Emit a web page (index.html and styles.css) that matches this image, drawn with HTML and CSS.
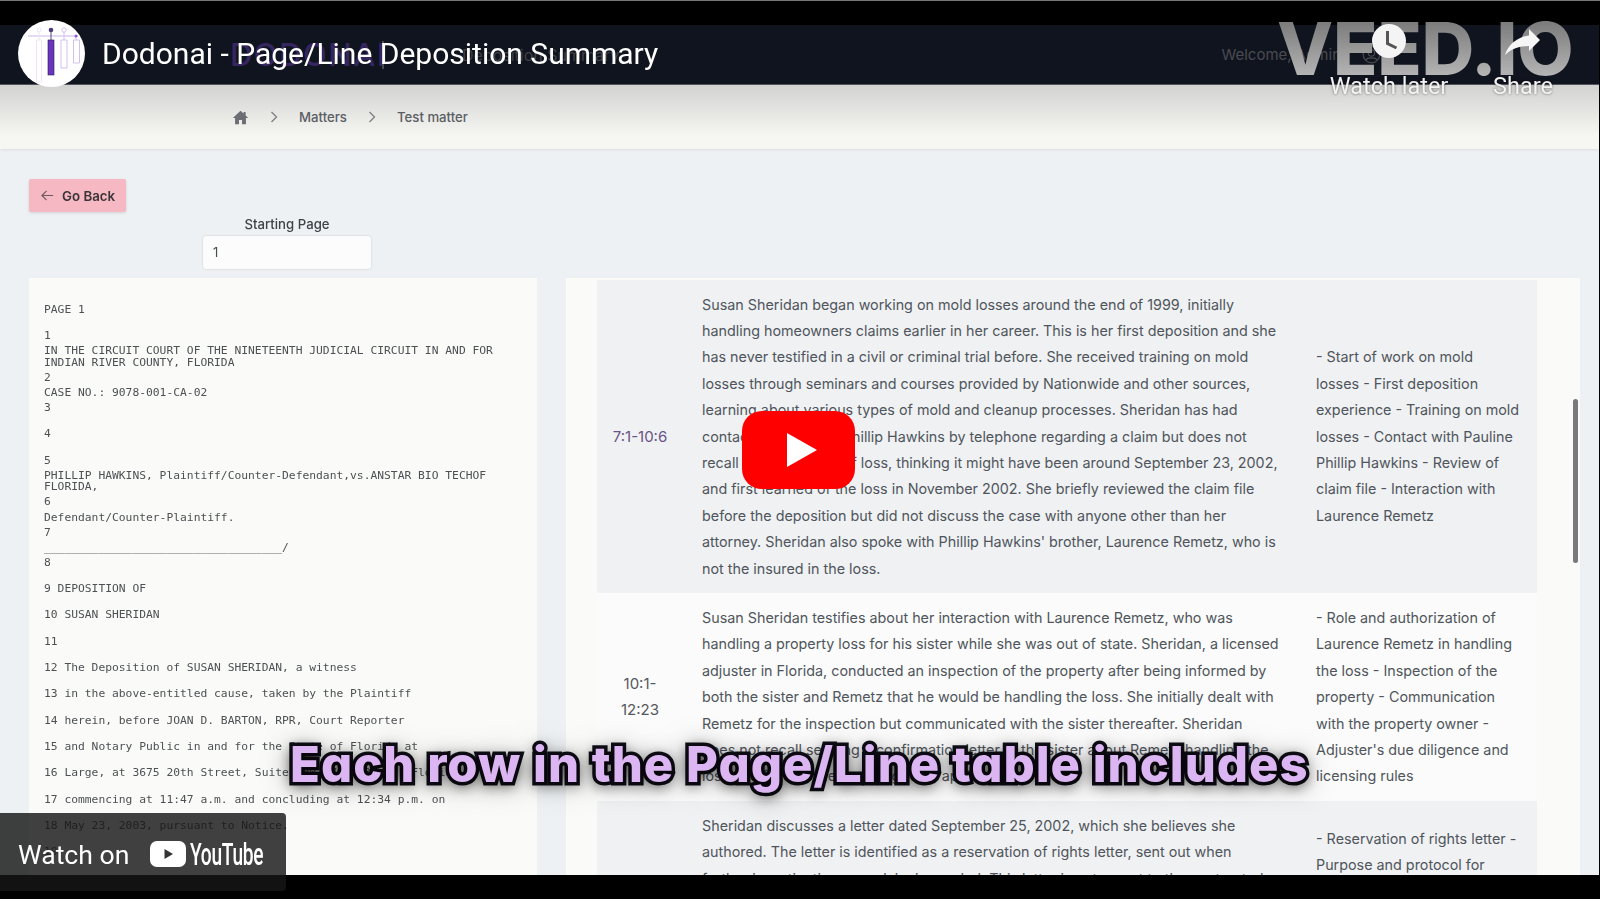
FILE: index.html
```html
<!DOCTYPE html>
<html lang="en">
<head>
<meta charset="utf-8">
<title>Dodonai - Page/Line Deposition Summary</title>
<link rel="stylesheet" href="styles.css">
</head>
<body>
<div class="stage">
  <div class="video">
    <div class="app">
      <header class="nav">
        <div class="brand">DODONAI</div>
        <div class="nav-divider"></div>
        <div class="nav-link">Deposition Summary</div>
        <div class="welcome">Welcome, Admin
          <svg class="user-icon" viewBox="0 0 24 24" fill="none" stroke="currentColor" stroke-width="1.5"><circle cx="12" cy="12" r="10.5"/><circle cx="12" cy="10" r="4"/><path d="M5 19c2-3.5 12-3.5 14 0"/></svg>
        </div>
      </header>
      <nav class="crumbs">
        <svg class="home" viewBox="0 0 20 20"><path d="M10 2 1 10.5h2.6V18h4.6v-5h3.6v5h4.6v-7.500H19l-3-2.900V3.500h-2.400v1.800z"/></svg>
        <svg class="chev" viewBox="0 0 10 14"><path d="M2.500 2 7.500 7l-5 5"/></svg>
        <span class="crumb">Matters</span>
        <svg class="chev" viewBox="0 0 10 14"><path d="M2.500 2 7.500 7l-5 5"/></svg>
        <span class="crumb">Test matter</span>
      </nav>
      <main class="main">
        <button class="back"><svg viewBox="0 0 16 16"><path d="M14 8H2.500M7 3 2 8l5 5"/></svg><span>Go Back</span></button>
        <div class="start">
          <label class="start-label">Starting Page</label>
          <div class="start-input">1</div>
        </div>
        <div class="cols">
          <section class="source">
            <div class="para"><div class="ln">PAGE 1</div></div>
            <div class="para">
              <div class="ln">1</div>
              <div class="ln">IN THE CIRCUIT COURT OF THE NINETEENTH JUDICIAL CIRCUIT IN AND FOR INDIAN RIVER COUNTY, FLORIDA</div>
              <div class="ln">2</div>
              <div class="ln">CASE NO.: 9078-001-CA-02</div>
              <div class="ln">3</div>
            </div>
            <div class="para"><div class="ln">4</div></div>
            <div class="para">
              <div class="ln">5</div>
              <div class="ln">PHILLIP HAWKINS, Plaintiff/Counter-Defendant,vs.ANSTAR BIO TECHOF FLORIDA,</div>
              <div class="ln">6</div>
              <div class="ln">Defendant/Counter-Plaintiff.</div>
              <div class="ln">7</div>
              <div class="ln">___________________________________/</div>
              <div class="ln">8</div>
            </div>
            <div class="para"><div class="ln">9 DEPOSITION OF</div></div>
            <div class="para"><div class="ln">10 SUSAN SHERIDAN</div></div>
            <div class="para"><div class="ln">11</div></div>
            <div class="para"><div class="ln">12 The Deposition of SUSAN SHERIDAN, a witness</div></div>
            <div class="para"><div class="ln">13 in the above-entitled cause, taken by the Plaintiff</div></div>
            <div class="para"><div class="ln">14 herein, before JOAN D. BARTON, RPR, Court Reporter</div></div>
            <div class="para"><div class="ln">15 and Notary Public in and for the State of Florida at</div></div>
            <div class="para"><div class="ln">16 Large, at 3675 20th Street, Suite 100, Vero Beach, Florida,</div></div>
            <div class="para"><div class="ln">17 commencing at 11:47 a.m. and concluding at 12:34 p.m. on</div></div>
            <div class="para"><div class="ln">18 May 23, 2003, pursuant to Notice.</div></div>
            <div class="para"><div class="ln">19</div></div>
          </section>
          <section class="summary">
            <div class="table">
              <div class="row shade">
                <div class="pg pg-active">7:1-10:6</div>
                <div class="txt">Susan Sheridan began working on mold losses around the end of 1999, initially handling homeowners claims earlier in her career. This is her first deposition and she has never testified in a civil or criminal trial before. She received training on mold losses through seminars and courses provided by Nationwide and other sources, learning about various types of mold and cleanup processes. Sheridan has had contact with Pauline Phillip Hawkins by telephone regarding a claim but does not<br>recall the exact date of loss, thinking it might have been around September 23, 2002,<br>and first learned of the loss in November 2002. She briefly reviewed the claim file<br>before the deposition but did not discuss the case with anyone other than her<br>attorney. Sheridan also spoke with Phillip Hawkins' brother, Laurence Remetz, who is<br>not the insured in the loss.</div>
                <div class="topics">- Start of work on mold<br>losses - First deposition<br>experience - Training on mold<br>losses - Contact with Pauline<br>Phillip Hawkins - Review of<br>claim file - Interaction with<br>Laurence Remetz</div>
              </div>
              <div class="row">
                <div class="pg">10:1-12:23</div>
                <div class="txt">Susan Sheridan testifies about her interaction with Laurence Remetz, who was handling a property loss for his sister while she was out of state. Sheridan, a licensed adjuster in Florida, conducted an inspection of the property after being informed by both the sister and Remetz that he would be handling the loss. She initially dealt with<br>Remetz for the inspection but communicated with the sister thereafter. Sheridan<br>does not recall sending a confirmation letter to the sister about Remetz handling the<br>loss and follows the licensing rules applicable.</div>
                <div class="topics">- Role and authorization of Laurence Remetz in handling the loss - Inspection of the property - Communication with the property owner - Adjuster's due diligence and licensing rules</div>
              </div>
              <div class="row shade">
                <div class="pg">13:1-15:9</div>
                <div class="txt">Sheridan discusses a letter dated September 25, 2002, which she believes she<br>authored. The letter is identified as a reservation of rights letter, sent out when<br>further investigation on a claim is needed. This letter is not meant to the contracted<br>insured and explains the protocol for the policy coverage that may apply to the<br>loss, and she reviews the letter at the deposition with counsel.<br>She has no further notes on the file.</div>
                <div class="topics">- Reservation of rights letter -<br>Purpose and protocol for<br>sending the letter to the<br>insured - Review of letter at<br>the deposition</div>
              </div>
            </div>
            <div class="scrollbar"></div>
          </section>
        </div>
      </main>
    </div>
  </div>

  <div class="yt-head">
    <div class="channel">
      <svg viewBox="0 0 67 67">
        <path class="lg-line" d="M10 16H60"/>
        <path class="lg-faint" d="M21 12V20M18.500 20h5v42h-5z"/>
        <circle class="lg-faint" cx="21" cy="10" r="2"/>
        <path class="lg-thin" d="M46 12V20M43 20h6v28h-6zM58 16V20M55.500 20h6v23h-6z"/>
        <circle class="lg-thin" cx="46" cy="10" r="2.200"/>
        <path class="lg-dark" d="M33 10V20"/>
        <circle class="lg-dot" cx="33" cy="10" r="2.300"/>
        <rect class="lg-bar" x="30" y="20" width="6" height="35"/>
        <circle class="lg-dot2" cx="58" cy="16" r="1.500"/>
      </svg>
    </div>
    <div class="yt-title">Dodonai - Page/Line Deposition Summary</div>
  </div>

  <div class="watermark">VEED.IO</div>

  <div class="yt-action later">
    <svg class="clock" viewBox="0 0 34 34"><circle class="clock-face" cx="17" cy="17" r="17"/><path class="clock-hand" d="M15.500 7v12.500l9 4.500"/></svg>
    <span>Watch later</span>
  </div>
  <div class="yt-action share">
    <svg class="arrow" viewBox="0 0 36 28"><path d="M35 12 24 1v6.500C12 9 3 17 0 27c6-6 14-9 24-9v5z"/></svg>
    <span>Share</span>
  </div>

  <div class="caption">Each row in the Page/Line table includes</div>

  <svg class="play" viewBox="0 0 113 78"><rect class="play-bg" width="113" height="78" rx="20"/><path class="play-tri" d="M45 22 75 39 45 56z"/></svg>

  <div class="watch">
    <span class="watch-on">Watch on</span>
    <svg class="yt-icon" viewBox="0 0 36 26"><rect class="yt-icon-bg" width="36" height="26" rx="7"/><path class="yt-icon-tri" d="M14.500 8 23 13l-8.500 5z"/></svg>
    <span class="yt-word">YouTube</span>
  </div>
</div>
</body>
</html>
```

FILE: styles.css
```css
* { box-sizing: border-box; }
html, body { margin: 0; padding: 0; background: #000; }
.stage {
  position: relative;
  width: 1600px;
  height: 899px;
  overflow: hidden;
  background: #000;
  border-top: 1px solid #777;
  padding-top: 24px;
}
.video { height: 850px; overflow: hidden; width: 1599px; }
.app { filter: blur(0.4px); background: #eef1f3; height: 850px; font-family: Inter, "Liberation Sans", sans-serif; }

.nav {
  height: 60px;
  background: #10141f;
  border-bottom: 1px solid #55575e;
  display: flex;
  align-items: center;
  padding-left: 230px;
}
.brand { font-size: 31px; font-weight: 500; letter-spacing: 1.5px; color: #35265f; width: 150px; }
.nav-divider { width: 2px; height: 28px; background: #4a4a4e; margin-left: 2px; }
.nav-link { font-size: 16px; color: #3f4046; margin-left: 78px; }
.welcome {
  margin-left: auto;
  margin-right: 218px;
  display: flex;
  align-items: center;
  gap: 21px;
  font-size: 15px;
  color: #4a4b50;
}
.user-icon { width: 19px; height: 19px; }

.crumbs {
  height: 64px;
  background: linear-gradient(#d2d2d1, #f6f6f2 80%);
  box-shadow: 0 1px 3px rgba(0,0,0,.08);
  display: flex;
  align-items: center;
  padding-left: 232px;
  color: #5b5e63;
}
.home { width: 17px; height: 17px; fill: #6b6e73; }
.chev { width: 10px; height: 14px; fill: none; stroke: #7d8085; stroke-width: 1.3; margin: 0 20px 0 20px; }
.crumb { font-size: 13.200px; font-weight: 500; }

.main { padding: 30px 0 0 29px; }
.back {
  display: flex;
  align-items: center;
  gap: 7px;
  width: 97px;
  height: 33px;
  padding: 0 0 0 11px;
  border: 0;
  border-radius: 2px;
  background: #f6b9c3;
  box-shadow: 0 1px 3px rgba(0,0,0,.12);
  font: 600 13.300px Inter, "Liberation Sans", sans-serif;
  color: #3b3438;
}
.back svg { width: 15px; height: 15px; fill: none; stroke: #6d5a60; stroke-width: 1.200; }
.start { width: 168px; margin: 3px 0 9px 174px; display: flex; flex-direction: column; align-items: center; gap: 3px; }
.start-label { font-size: 13.200px; font-weight: 500; line-height: 18px; color: #3f4246; }
.start-input {
  width: 168px;
  height: 33px;
  padding: 0 10px;
  background: #fbfcfb;
  border-radius: 3px;
  box-shadow: 0 0 2px rgba(0,0,0,.2);
  font-size: 13px;
  line-height: 33px;
  color: #4a4d50;
}

.cols { display: flex; gap: 29px; align-items: flex-start; }
.source {
  width: 508px;
  height: 610px;
  padding: 26px 32px 0 15px;
  background: #fafbf8;
  font-family: "DejaVu Sans Mono", monospace;
  font-size: 11.300px;
  line-height: 11.500px;
  color: #4d5054;
}
.para { margin-bottom: 14.800px; }
.ln { margin-bottom: 3.600px; }
.para .ln:last-child { margin-bottom: 0; }

.summary {
  position: relative;
  width: 1014px;
  height: 610px;
  padding: 2px 0 0 31px;
  background: #fafbf8;
}
.table { width: 940px; font-size: 14.330px; line-height: 26.400px; color: #50555c; }
.row { display: grid; grid-template-columns: 105px 614px 1fr; padding: 11.500px 0; background: #fafbfa; }
.row.shade { background: #eff1f3; }
.pg { width: 62px; margin-left: 12px; align-self: center; text-align: center; overflow-wrap: anywhere; font-size: 15px; color: #55585e; }
.pg-active { color: #6a5488; }
.txt { width: 590px; }
.topics { align-self: center; padding-right: 14px; }
.scrollbar {
  position: absolute;
  left: 1007px;
  top: 121px;
  width: 5px;
  height: 164px;
  border-radius: 3px;
  background: #77797c;
}

.yt-head {
  position: absolute;
  left: 18px;
  top: 19px;
  display: flex;
  align-items: center;
  gap: 17px;
}
.channel { width: 67px; height: 67px; border-radius: 50%; background: #fff; overflow: hidden; }
.channel svg { display: block; width: 67px; height: 67px; fill: none; }
.lg-line { stroke: #dccdf2; stroke-width: 1.500; }
.lg-faint { stroke: #ece6f6; stroke-width: 1; }
.lg-thin { stroke: #d3c0ee; stroke-width: 1; }
.lg-dark { stroke: #5a4a78; stroke-width: 1; }
.lg-dot { fill: #4a3a78; }
.lg-dot2 { fill: #8a5cd6; }
.lg-bar { fill: #6a35bd; stroke: #2d1d55; stroke-width: .6; }
.yt-title { font-family: Roboto, sans-serif; font-size: 30px; line-height: 36px; margin-top: 1px; color: #fff; white-space: nowrap; }

.watermark {
  position: absolute;
  left: 1277px;
  top: 4px;
  font-family: Inter, sans-serif;
  font-weight: 800;
  font-size: 73px;
  line-height: 88px;
  letter-spacing: -.2px;
  white-space: nowrap;
  background: linear-gradient(#7c7c7c 20%, #b4b4b4 80%);
  -webkit-background-clip: text;
  background-clip: text;
  color: transparent;
}

.yt-action {
  position: absolute;
  top: 23px;
  display: flex;
  flex-direction: column;
  align-items: center;
  width: 130px;
  font-family: Roboto, sans-serif;
  font-size: 23.500px;
  line-height: 26px;
  color: #f2f2f2;
  text-shadow: 0 0 3px rgba(0,0,0,.55);
}
.later { left: 1324px; }
.share { left: 1458px; }
.clock { width: 34px; height: 34px; margin-bottom: 15px; }
.clock-face { fill: #f4f4f4; }
.clock-hand { fill: none; stroke: #555; stroke-width: 3; }
.arrow { width: 36px; height: 28px; margin: 4px 0 17px; fill: #f6f6f6; }

.caption {
  position: absolute;
  left: 290px;
  top: 731px;
  width: 1020px;
  white-space: nowrap;
  font-family: Inter, sans-serif;
  font-feature-settings: "cv11";
  font-weight: 800;
  font-size: 49px;
  letter-spacing: 1px;
  line-height: 66px;
  color: #dcb6f2;
  -webkit-text-stroke: 7px #12101a;
  paint-order: stroke fill;
  text-shadow: 0 3px 14px rgba(0,0,0,.8), 0 3px 28px rgba(0,0,0,.55);
}

.play { position: absolute; left: 742px; top: 410px; width: 113px; height: 78px; }
.play-bg { fill: #f00; }
.play-tri { fill: #fff; }

.watch {
  position: absolute;
  left: 0;
  top: 812px;
  width: 286px;
  height: 78px;
  display: flex;
  align-items: center;
  padding: 4px 0 0 18px;
  border-radius: 0 4px 4px 0;
  background: rgba(22,22,22,.82);
  color: #fff;
  font-family: Roboto, sans-serif;
}
.watch-on { font-size: 26.600px; width: 132px; flex-shrink: 0; }
.yt-icon { width: 36px; height: 26px; flex-shrink: 0; }
.yt-icon-bg { fill: #fff; }
.yt-icon-tri { fill: #333; }
.yt-word {
  flex-shrink: 0;
  width: 74px;
  margin-left: 4px;
  font-size: 32px;
  font-weight: 500;
  letter-spacing: -.5px;
  white-space: nowrap;
  transform: scaleX(.6);
  transform-origin: left center;
}
```
